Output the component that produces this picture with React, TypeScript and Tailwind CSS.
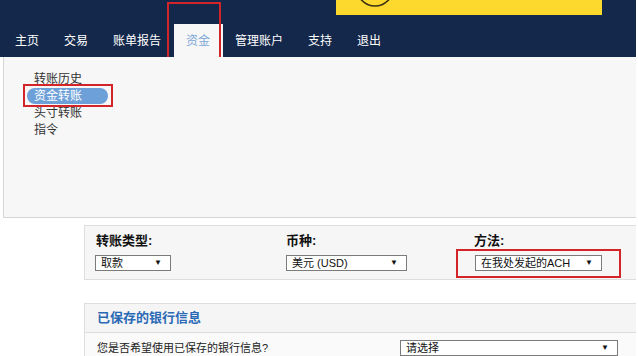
import React from "react";

const navItems = ["主页", "交易", "账单报告", "资金", "管理账户", "支持", "退出"];
const sideItems = ["转账历史", "资金转账", "头寸转账", "指令"];

function Select({ value, className }: { value: string; className: string }) {
  return (
    <div
      className={`flex h-[16px] items-center justify-between border border-[#7b7b7b] bg-white pl-[5px] pr-[8px] text-[11px] leading-none text-[#111] ${className}`}
    >
      <span>{value}</span>
      <span className="text-[8px]">▼</span>
    </div>
  );
}

export default function App() {
  return (
    <div
      className="min-h-[356px] w-[636px] overflow-hidden bg-white text-[12px] text-[#222]"
      style={{ fontFamily: '"Liberation Sans", "Noto Sans CJK SC", sans-serif' }}
    >
      {/* top bar */}
      <div className="relative flex h-[57px] flex-col bg-[#14284b]">
        <div className="h-[24px]">
          <div className="relative ml-[336px] h-[15px] w-[266px] overflow-hidden bg-[#fcd92c]">
            <svg width="266" height="15" className="absolute left-0 top-0">
              <circle cx="39" cy="-12" r="18" fill="none" stroke="#3a2f18" strokeWidth="1.6" />
            </svg>
          </div>
        </div>
        <div className="flex h-[33px] items-stretch pl-[2.5px]">
          {navItems.map((n) => (
            <div
              key={n}
              className={
                n === "资金"
                  ? "flex items-center bg-[#f7f7f7] px-[12.5px] text-[#7ea7d6]"
                  : "flex items-center px-[12.5px] text-white"
              }
            >
              {n}
            </div>
          ))}
        </div>
        <div className="absolute left-[167px] top-[2px] h-[75px] w-[54px] border-2 border-[#d3242a]" />
      </div>

      {/* sub menu panel */}
      <div className="relative ml-[3px] h-[161px] w-[633px] border-b border-l border-[#d6d6d6] bg-[#f7f7f7] pt-[13px]">
        {sideItems.map((s) =>
          s === "资金转账" ? (
            <div key={s} className="flex h-[17px] items-center">
              <div className="ml-[23px] flex h-[16px] w-[81px] items-center rounded-full bg-[#6d9fd9] pl-[7px] text-white">
                {s}
              </div>
            </div>
          ) : (
            <div key={s} className="flex h-[17px] items-center pl-[30px] text-[#333]">
              {s}
            </div>
          )
        )}
        <div className="absolute left-[19px] top-[27px] h-[23px] w-[90px] border-2 border-[#d3242a]" />
      </div>

      {/* transfer options */}
      <div className="ml-[84px] mt-[7px] h-[55px] border border-r-0 border-[#dedede] bg-[#f6f6f6] pl-[10px] pt-[7px]">
        <div className="flex">
          <div className="w-[191px]">
            <div className="h-[16px] pl-[1px] text-[13px] font-bold leading-[16px] text-[#111]">转账类型:</div>
            <Select value="取款" className="mt-[6px] w-[76px]" />
          </div>
          <div className="w-[188px]">
            <div className="h-[16px] text-[13px] font-bold leading-[16px] text-[#111]">币种:</div>
            <Select value="美元 (USD)" className="mt-[6px] w-[121px]" />
          </div>
          <div>
            <div className="h-[16px] text-[13px] font-bold leading-[16px] text-[#111]">方法:</div>
            <div className="relative mt-[6px] ml-[1px]">
              <Select value="在我处发起的ACH" className="w-[127px]" />
              <div className="absolute -left-[19px] -top-[6px] h-[29px] w-[165px] border-2 border-[#d3242a]" />
            </div>
          </div>
        </div>
      </div>

      {/* saved bank info */}
      <div className="ml-[84px] mt-[23px] border border-r-0 border-[#dedede]">
        <div className="flex h-[29px] items-center border-b border-[#dcdcdc] bg-[#f5f5f5] pl-[12px] text-[13px] font-bold text-[#2a6ab5]">
          已保存的银行信息
        </div>
        <div className="flex items-center bg-[#fafafa] pl-[12px] pt-[7px] pb-[6px]">
          <div className="w-[303px] text-[11px] text-[#222]">您是否希望使用已保存的银行信息?</div>
          <Select value="请选择" className="w-[218px]" />
        </div>
      </div>
    </div>
  );
}
